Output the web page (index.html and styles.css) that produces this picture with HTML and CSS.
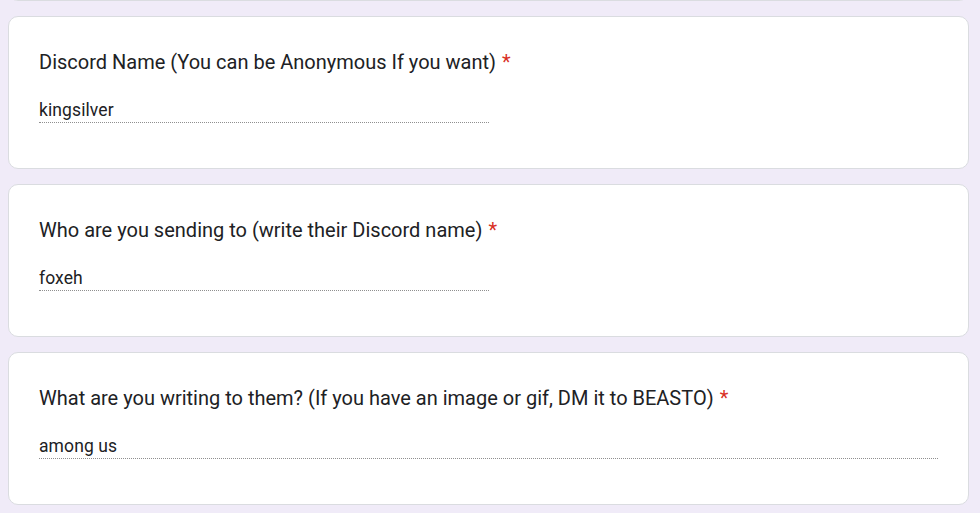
FILE: index.html
```html
<!DOCTYPE html>
<html lang="en">
<head>
<meta charset="utf-8">
<title>Form</title>
<link rel="stylesheet" href="styles.css">
</head>
<body>
<div class="form">
  <div class="card card-prev"></div>
  <div class="card">
    <div class="title">Discord Name (You can be Anonymous If you want)<span class="req">*</span></div>
    <div class="answer half">kingsilver</div>
  </div>
  <div class="card">
    <div class="title">Who are you sending to (write their Discord name)<span class="req">*</span></div>
    <div class="answer half">foxeh</div>
  </div>
  <div class="card">
    <div class="title">What are you writing to them? (If you have an image or gif, DM it to BEASTO)<span class="req">*</span></div>
    <div class="answer">among us</div>
  </div>
</div>
</body>
</html>
```

FILE: styles.css
```css
* { box-sizing: border-box; }
html, body {
  margin: 0;
  padding: 0;
  background: #f0ebf8;
  height: 100%;
  overflow: hidden;
}
body {
  font-family: Roboto, "Liberation Sans", Arial, sans-serif;
  color: #202124;
}
.form {
  display: flex;
  flex-direction: column;
  gap: 15px;
  padding: 0 11px 0 8px;
}
.card {
  background: #fff;
  border: 1px solid #dadce0;
  border-radius: 10px;
  padding: 30px 30px 45px;
  height: 153px;
}
.card-prev {
  height: 21px;
  margin-top: -20px;
  padding: 0;
}
.title {
  font-size: 20px;
  line-height: 30px;
  letter-spacing: 0;
}
.req {
  color: #d93025;
  padding-left: 6px;
}
.answer {
  margin-top: 23px;
  font-size: 17.5px;
  line-height: 21px;
  padding-bottom: 1px;
  border-bottom: 1px dotted #8f8f8f;
  letter-spacing: 0.1px;
}
.half { width: 50%; }
```
